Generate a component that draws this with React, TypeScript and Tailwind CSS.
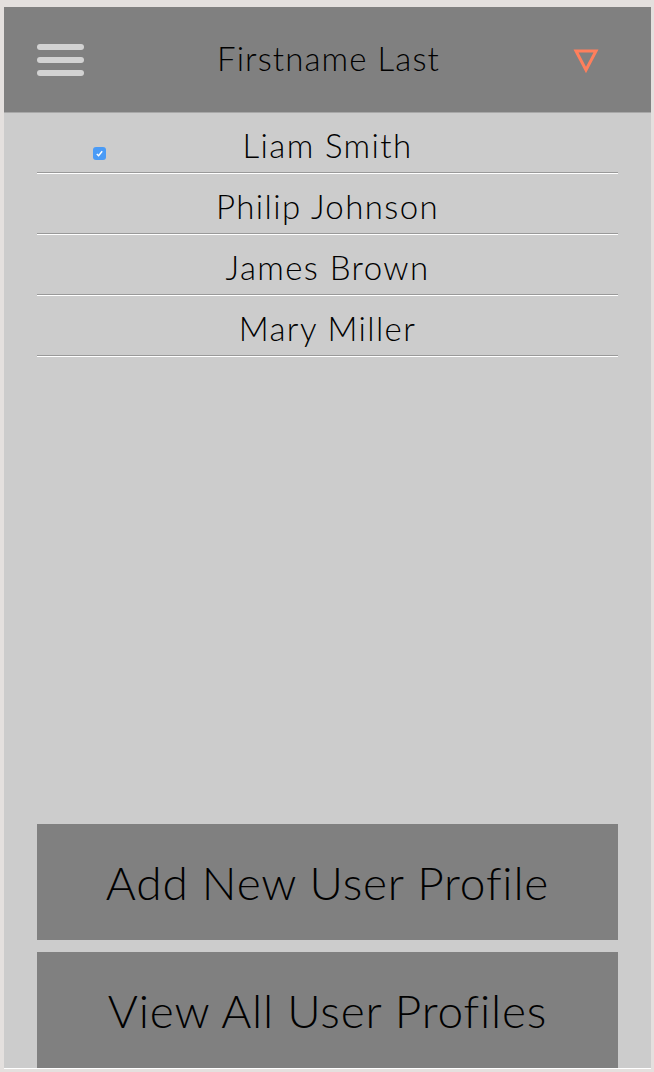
import React from 'react';

const USERS = ['Liam Smith', 'Philip Johnson', 'James Brown', 'Mary Miller'];

function Hamburger() {
  return (
    <div className="flex w-[47px] flex-col gap-[7px]">
      <span className="h-[6px] rounded-full bg-[#d2d2d2]" />
      <span className="h-[6px] rounded-full bg-[#d2d2d2]" />
      <span className="h-[6px] rounded-full bg-[#d2d2d2]" />
    </div>
  );
}

function Triangle() {
  return (
    <svg width="26" height="26" viewBox="0 0 26 26">
      <path d="M3 4 L23 4 L13 23 Z" fill="none" stroke="#ff7f5c" strokeWidth="3" strokeLinejoin="miter" />
    </svg>
  );
}

function Check() {
  return (
    <span className="flex h-[13px] w-[13px] items-center justify-center rounded-[3px] bg-[#4a9bf6]">
      <svg width="9" height="9" viewBox="0 0 10 10">
        <path d="M2 5.5 L4 7.5 L8 2.5" fill="none" stroke="#fff" strokeWidth="1.6" />
      </svg>
    </span>
  );
}

export default function App() {
  return (
    <div className="h-[1072px] w-[654px] overflow-hidden bg-[#e4e0de] pl-[4px] pr-[3px] pt-[7px] font-['Lato',sans-serif] font-light">
      <div className="flex h-[1062px] flex-col bg-[#cccccc] border-b border-white">
        <header className="flex h-[106px] shrink-0 items-center justify-between border-b border-[#a8a8a8] bg-[#808080] pl-[33px] pr-[52px]">
          <Hamburger />
          <h1 className="pb-[2px] text-[33px] leading-none tracking-[1.1px] text-black">Firstname Last</h1>
          <Triangle />
        </header>

        <ul className="mx-[33px] flex flex-col">
          {USERS.map((name, i) => (
            <li key={name} className="flex flex-col">
              <div className="grid h-[59px] grid-cols-[1fr_auto_1fr] items-center">
                <div className="pl-[56px] pt-[22px]">{i === 0 && <Check />}</div>
                <span className="pt-[6px] text-[33px] leading-none tracking-[1.4px] text-black">{name}</span>
                <div />
              </div>
              <div className="h-[2px] border-t border-[#999999] border-b-white border-b" />
            </li>
          ))}
        </ul>

        <div className="mt-auto mx-[33px] flex flex-col gap-[12px]">
          <button className="flex h-[116px] items-center justify-center bg-[#808080] text-[46px] tracking-[0.8px] text-black">
            Add New User Profile
          </button>
          <button className="flex h-[116px] items-center justify-center bg-[#808080] text-[46px] tracking-[0.8px] text-black">
            View All User Profiles
          </button>
        </div>
      </div>
    </div>
  );
}
